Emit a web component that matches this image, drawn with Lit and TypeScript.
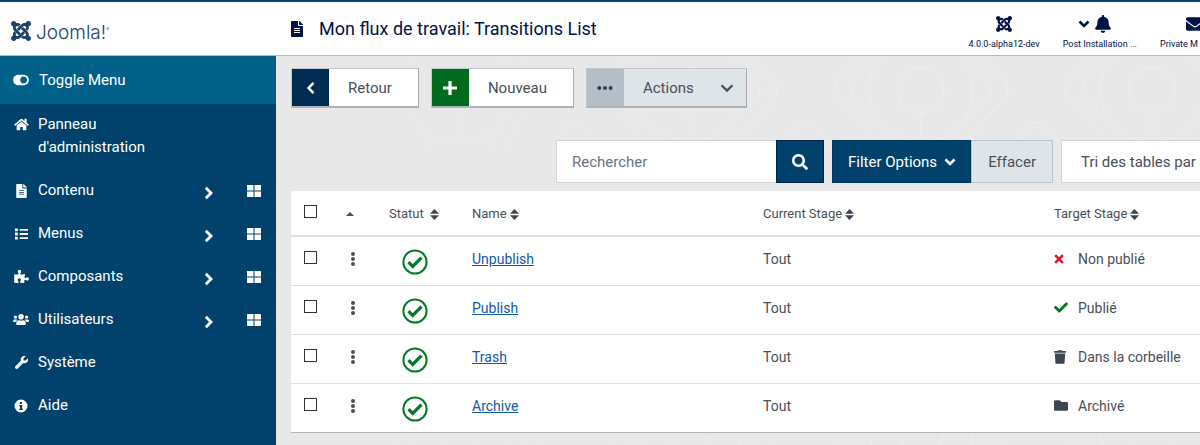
import { LitElement, html, svg, css, nothing } from "lit";
import { customElement, property, state } from "lit/decorators.js";

const line = (d: string, w: number) =>
  svg`<path d=${d} fill="none" stroke="currentColor" stroke-width=${w} />`;
const fill = (d: string) => svg`<path d=${d} fill="currentColor" />`;

const ICONS: Record<string, [string, unknown]> = {
  joomla: ["0 32 448 448", fill("M.6 92.1C.6 58.8 27.4 32 60.4 32c30 0 54.5 21.9 59.2 50.2 32.6-7.6 67.1.6 96.5 30l-44.3 44.3c-20.5-20.5-42.6-16.3-55.4-3.5-14.3 14.3-14.3 37.9 0 52.2l99.5 99.5-44 44.3c-87.7-87.2-49.7-49.7-99.8-99.7-26.8-26.5-35-64.8-24.8-98.9C20.4 144.6.6 120.7.6 92.1zm129.5 116.4l44.3 44.3c10-10 89.7-89.7 99.7-99.8 14.3-14.3 37.6-14.3 51.9 0 12.8 12.8 17 35-3.5 55.4l44 44.3c31.2-31.2 38.5-67.6 28.9-101.2 29.2-4.1 51.9-29.2 51.9-59.5 0-33.2-26.8-60.1-59.8-60.1-30.3 0-55.4 22.5-59.5 51.6-33.8-9.9-71.7-1.5-98.3 25.1-18.3 19.1-71.1 71.5-99.6 99.9zm266.3 152.2c8.2-32.7-.9-68.5-26.3-93.9-11.8-12.2 5 4.7-99.5-99.7l-44.3 44.3 99.7 99.7c14.3 14.3 14.3 37.6 0 51.9-12.8 12.8-35 17-55.4-3.5l-44 44.3c27.6 30.2 68 38.8 102.7 28 5.5 27.4 29.7 48.1 58.9 48.1 33 0 59.8-26.8 59.8-60.1 0-30.2-22.5-55-51.6-59.1zm-84.3-53.1l-44-44.3c-87 86.4-50.4 50.4-99.7 99.8-14.3 14.3-37.6 14.3-51.9 0-13.1-13.4-16.9-35.3 3.2-55.4l-44-44.3c-30.2 30.2-38 65.2-29.5 98.3-26.7 6-46.2 29.9-46.2 58.2C0 453.2 26.8 480 59.8 480c28.6 0 52.5-19.8 58.6-46.7 32.7 8.2 68.5-.6 94.2-26 32.1-32 12.2-12.4 99.5-99.7z")],
  toggle: ["0 0 576 512", fill("M384 64H192C86 64 0 150 0 256s86 192 192 192h192c106 0 192-86 192-192S490 64 384 64zm0 320c-70.8 0-128-57.3-128-128 0-70.8 57.3-128 128-128 70.8 0 128 57.3 128 128 0 70.8-57.3 128-128 128z")],
  file: ["0 0 384 512", fill("M224 136V0H24C10.7 0 0 10.7 0 24v464c0 13.3 10.7 24 24 24h336c13.3 0 24-10.7 24-24V160H248c-13.2 0-24-10.8-24-24zm64 236c0 6.6-5.4 12-12 12H108c-6.6 0-12-5.4-12-12v-8c0-6.6 5.4-12 12-12h168c6.6 0 12 5.4 12 12v8zm0-64c0 6.6-5.4 12-12 12H108c-6.6 0-12-5.4-12-12v-8c0-6.6 5.4-12 12-12h168c6.6 0 12 5.4 12 12v8zm0-72v8c0 6.6-5.4 12-12 12H108c-6.6 0-12-5.4-12-12v-8c0-6.6 5.4-12 12-12h168c6.6 0 12 5.4 12 12zm96-114.1v6.1H256V0h6.1c6.4 0 12.5 2.5 17 7l97.9 98c4.5 4.5 7 10.6 7 16.9z")],
  home: ["0 0 576 512", fill("M280.37 148.26L96 300.11V464a16 16 0 0 0 16 16l112.06-.29a16 16 0 0 0 15.92-16V368a16 16 0 0 1 16-16h64a16 16 0 0 1 16 16v95.64a16 16 0 0 0 16 16.05L464 480a16 16 0 0 0 16-16V300L295.67 148.26a12.19 12.19 0 0 0-15.3 0zM571.6 251.47L488 182.56V44.05a12 12 0 0 0-12-12h-56a12 12 0 0 0-12 12v72.61L318.47 43a48 48 0 0 0-61 0L4.34 251.47a12 12 0 0 0-1.6 16.9l25.5 31A12 12 0 0 0 45.15 301l235.22-193.74a12.19 12.19 0 0 1 15.3 0L530.9 301a12 12 0 0 0 16.9-1.6l25.5-31a12 12 0 0 0-1.7-16.93z")],
  list: ["0 0 14 12", fill("M0 0h3v3H0zM5 .5h9v2H5zM0 4.5h3v3H0zM5 5h9v2H5zM0 9h3v3H0zM5 9.500h9v2H5z")],
  puzzle: ["0 0 576 512", fill("M519.442 288.651c-41.519 0-59.5 31.593-82.058 31.593C377.409 320.244 432 144 432 144s-196.288 80-196.288-3.297c0-35.827 36.288-46.25 36.288-85.985C272 19.216 243.885 0 210.539 0c-34.654 0-66.366 18.891-66.366 56.346 0 41.364 31.711 59.277 31.711 81.75C175.885 207.719 0 166.758 0 166.758v333.237s178.635 41.047 178.635-28.662c0-22.473-40-40.107-40-81.471 0-37.456 29.25-56.346 63.577-56.346 33.673 0 61.788 19.216 61.788 54.717 0 39.735-36.288 50.158-36.288 85.985 0 60.803 129.675 25.73 181.23 25.73 0 0-34.725-120.101 25.827-120.101 35.962 0 46.423 36.152 86.308 36.152C556.712 416 576 387.99 576 354.443c0-34.199-18.962-65.792-56.558-65.792z")],
  users: ["0 0 640 512", svg`<g fill="currentColor"><circle cx="96" cy="160" r="64"/><circle cx="544" cy="160" r="64"/><circle cx="320" cy="144" r="112"/><path d="M0 320c0-40 24-64 64-64h64c20 0 34 6 46 18-38 20-60 48-66 78H32c-20 0-32-12-32-32zM640 320c0-40-24-64-64-64h-64c-20 0-34 6-46 18 38 20 60 48 66 78h76c20 0 32-12 32-32zM128 432v-29c0-64 52-115 115-115h8c44 20 94 20 138 0h8c63 0 115 51 115 115v29c0 26-22 48-48 48H176c-26 0-48-22-48-48z"/></g>`],
  wrench: ["0 0 512 512", fill("M507.73 109.1c-2.24-9.03-13.54-12.09-20.12-5.51l-74.36 74.36-67.88-11.31-11.31-67.88 74.36-74.36c6.62-6.62 3.43-17.9-5.66-20.16-47.38-11.74-99.55.91-136.58 37.93-39.64 39.64-50.55 97.1-34.05 147.2L18.74 402.76c-24.99 24.99-24.99 65.51 0 90.5 24.99 24.99 65.51 24.99 90.5 0l213.21-213.21c50.12 16.71 107.47 5.68 147.37-34.22 37.07-37.07 49.7-89.32 37.91-136.73z")],
  info: ["0 0 14 14", svg`<path fill="currentColor" fill-rule="evenodd" d="M7 .5a6.500 6.500 0 1 0 0 13a6.500 6.500 0 0 0 0-13zM5.800 3h2.200v2H5.800zM5.200 5.900h2.900v3.900h.8v1.300H5.200V9.800H6V7.200h-.8z"/>`],
  grid: ["0 0 14 12", fill("M0 0h6.500v5.500H0zM7.500 0H14v5.500H7.500zM0 6.500h6.500V12H0zM7.500 6.500H14V12H7.500z")],
  right: ["0 0 10 14", line("M1.800 1.800L7 7l-5.200 5.200", 2.800)],
  left: ["0 0 10 14", line("M7.500 1.800L2.600 7l4.900 5.200", 2.500)],
  down: ["0 0 14 10", line("M1.500 2.200L7 7.600l5.500-5.400", 2.300)],
  caret: ["0 0 12 10", line("M1.500 2.500L6 7l4.500-4.500", 2.600)],
  plus: ["0 0 14 14", line("M7 0v14M0 7h14", 3.200)],
  dots: ["0 0 16 4", svg`<g fill="currentColor"><circle cx="2.300" cy="2" r="2"/><circle cx="8" cy="2" r="2"/><circle cx="13.700" cy="2" r="2"/></g>`],
  kebab: ["0 0 4 14", svg`<g fill="currentColor"><circle cx="2" cy="2" r="2"/><circle cx="2" cy="7" r="2"/><circle cx="2" cy="12" r="2"/></g>`],
  bell: ["0 0 448 512", fill("M224 512c35.320 0 63.970-28.650 63.970-64H160.030c0 35.350 28.650 64 63.970 64zm215.390-149.710c-19.320-20.760-55.470-51.990-55.470-154.290 0-77.700-54.480-139.900-127.940-155.160V32c0-17.670-14.320-32-31.980-32s-31.980 14.330-31.980 32v20.840C118.560 68.100 64.080 130.300 64.080 208c0 102.300-36.150 133.530-55.470 154.290-6 6.450-8.660 14.160-8.610 21.710.11 16.400 12.980 32 32.100 32h383.800c19.120 0 32-15.600 32.100-32 .05-7.550-2.610-15.270-8.610-21.710z")],
  mail: ["0 64 512 384", fill("M502.3 190.8c3.9-3.1 9.7-.2 9.7 4.7V400c0 26.5-21.5 48-48 48H48c-26.5 0-48-21.5-48-48V195.6c0-5 5.7-7.8 9.7-4.7 22.4 17.4 52.1 39.5 154.1 113.6 21.1 15.4 56.7 47.8 92.2 47.6 35.7.3 72-32.8 92.3-47.6 102-74.1 131.600-96.300 154-113.700zM256 320c23.200.4 56.600-29.200 73.400-41.400 132.700-96.300 142.800-104.700 173.400-128.700 5.800-4.500 9.200-11.500 9.200-18.900v-19c0-26.500-21.500-48-48-48H48c-26.500 0-48 21.500-48 48v19c0 7.400 3.400 14.300 9.200 18.900 30.600 23.900 40.700 32.400 173.400 128.700 16.800 12.200 50.200 41.800 73.400 41.400z")],
  search: ["0 0 512 512", fill("M505 442.7L405.3 343c-4.5-4.5-10.6-7-17-7H372c27.6-35.3 44-79.7 44-128C416 93.1 322.9 0 208 0S0 93.1 0 208s93.1 208 208 208c48.3 0 92.7-16.4 128-44v16.3c0 6.4 2.5 12.5 7 17l99.7 99.7c9.4 9.4 24.6 9.4 33.9 0l28.3-28.3c9.4-9.4 9.4-24.6.1-34zM208 336c-70.7 0-128-57.2-128-128 0-70.7 57.2-128 128-128 70.7 0 128 57.2 128 128 0 70.7-57.2 128-128 128z")],
  check: ["0 60 512 392", fill("M173.898 439.404l-166.4-166.4c-9.997-9.997-9.997-26.206 0-36.204l36.203-36.204c9.997-9.998 26.207-9.998 36.204 0L192 312.69 432.095 72.596c9.997-9.997 26.207-9.997 36.204 0l36.203 36.204c9.997 9.997 9.997 26.206 0 36.204l-294.4 294.401c-9.998 9.997-26.207 9.997-36.204-.001z")],
  cross: ["0 0 10 10", line("M1.200 1.200l7.600 7.600M8.800 1.200L1.200 8.800", 2.600)],
  trash: ["0 0 448 512", fill("M432 32H312l-9.4-18.7A24 24 0 0 0 281.1 0H166.8a23.72 23.72 0 0 0-21.4 13.3L136 32H16A16 16 0 0 0 0 48v32a16 16 0 0 0 16 16h416a16 16 0 0 0 16-16V48a16 16 0 0 0-16-16zM53.2 467a48 48 0 0 0 47.9 45h245.8a48 48 0 0 0 47.9-45L416 128H32z")],
  folder: ["0 64 512 384", fill("M464 128H272l-64-64H48C21.49 64 0 85.49 0 112v288c0 26.51 21.49 48 48 48h416c26.51 0 48-21.49 48-48V176c0-26.51-21.49-48-48-48z")],
  sort: ["0 0 9 11", fill("M4.500 0L9 4.700H0zM0 6.300h9L4.500 11z")],
  up: ["0 0 8 4", fill("M4 0l4 4H0z")],
  published: ["0 0 26 26", svg`<circle cx="13" cy="13" r="11.600" fill="none" stroke="currentColor" stroke-width="2"/><path d="M6.500 13.200l4.200 4.200 8.800-8.800" fill="none" stroke="currentColor" stroke-width="3.200"/>`],
};

const icon = (name: string, width: number, height: number) => html`<svg
  class="icon" viewBox=${ICONS[name][0]} width=${width} height=${height} aria-hidden="true"
>${ICONS[name][1]}</svg>`;

const shared = css`
  * { box-sizing: border-box; }
  .icon { display: block; flex: none; }
  a { color: inherit; text-decoration: none; }
  button, input, select { font: inherit; color: inherit; margin: 0; border-radius: 0; }
  button { display: flex; align-items: center; padding: 0; border: 0; background: none; cursor: pointer; }
`;

@customElement("page-header")
class PageHeader extends LitElement {
  static styles = [shared, css`
    :host { display: flex; height: 56px; border-top: 2px solid #00436b; border-bottom: 1px solid #b9b9b9; background: #fff; color: #001247; overflow: hidden; }
    .brand { display: flex; align-items: center; gap: 5px; flex: 0 0 291px; padding: 4px 0 0 11px; color: #1c4266; }
    .word { font: 300 19px/24px Inter, sans-serif; }
    .reg { font-size: 5px; vertical-align: 8px; }
    .title { display: flex; align-items: center; gap: 16px; flex: 1; margin: 0; font-size: 18px; line-height: 24px; font-weight: 400; white-space: nowrap; }
    .status { display: flex; flex: none; gap: 23px; padding-top: 13px; font-size: 9px; line-height: 12px; white-space: nowrap; }
    .item { display: flex; flex-direction: column; align-items: center; gap: 5px; }
    .glyphs { display: flex; align-items: center; gap: 5px; height: 18px; }
    .alerts .glyphs { padding-right: 10px; }
    .mail { width: 40px; align-items: flex-start; }
    .mail .glyphs { padding-left: 26px; }
  `];
  render() {
    return html`
      <a class="brand" href="#" aria-label="Joomla!">${icon("joomla", 20, 20)}<span class="word">Joomla!<span class="reg">®</span></span></a>
      <h1 class="title">${icon("file", 12, 16)}<span>Mon flux de travail: Transitions List</span></h1>
      <div class="status">
        <a class="item" href="#"><span class="glyphs">${icon("joomla", 16, 16)}</span>4.0.0-alpha12-dev</a>
        <a class="item alerts" href="#"><span class="glyphs">${icon("caret", 12, 10)}${icon("bell", 16, 18)}</span>Post Installation ...</a>
        <a class="item mail" href="#"><span class="glyphs">${icon("mail", 18, 14)}</span>Private M</a>
      </div>`;
  }
}

@customElement("side-menu")
class SideMenu extends LitElement {
  static styles = [shared, css`
    :host { display: block; background: #00426b; color: #fff; font-size: 15px; line-height: 23px; }
    .toggle { width: 100%; height: 48px; padding-left: 13px; gap: 10px; background: #006088; text-align: left; }
    ul { list-style: none; margin: 0; padding: 0; }
    .row { display: flex; align-items: flex-start; padding: 9px 14px 11px 13px; }
    .link { display: flex; flex: 1; gap: 9px; }
    .glyph { display: flex; align-items: center; justify-content: center; width: 16px; height: 23px; flex: none; }
    .label { max-width: 130px; }
    .more { height: 23px; padding-top: 5px; margin-right: 32px; }
  `];
  items: [string, string, number, number, boolean][] = [
    ["home", "Panneau d'administration", 15, 13, false],
    ["file", "Contenu", 11, 14, true],
    ["list", "Menus", 13, 12, true],
    ["puzzle", "Composants", 15, 13, true],
    ["users", "Utilisateurs", 16, 13, true],
    ["wrench", "Système", 13, 13, false],
    ["info", "Aide", 14, 14, false],
  ];
  render() {
    return html`
      <button class="toggle">${icon("toggle", 16, 14)}Toggle Menu</button>
      <ul>${this.items.map(([glyph, label, w, h, more]) => html`
        <li class="row">
          <a class="link" href="#"><span class="glyph">${icon(glyph, w, h)}</span><span class="label">${label}</span></a>
          ${more ? html`
            <button class="more" aria-label="Ouvrir ${label}">${icon("right", 10, 14)}</button>
            <a class="glyph" href="#" aria-label="Tableau de bord ${label}">${icon("grid", 14, 12)}</a>` : nothing}
        </li>`)}
      </ul>`;
  }
}

@customElement("tool-bar")
class ToolBar extends LitElement {
  static styles = [shared, css`
    :host { display: flex; gap: 12px; font-size: 15px; line-height: 22px; color: #495057; }
    .tool { height: 40px; border: 1px solid #c4c8cc; border-right-color: #a8acb0; border-bottom: 2px solid #b0b3b6; background: #fff; }
    .glyph { display: flex; align-items: center; justify-content: center; align-self: stretch; width: 37px; color: #fff; }
    .back { background: #002d53; }
    .new { background: #006b1d; }
    .more { background: #b4bec8; color: #33404b; }
    .text { padding: 0 26px 0 19px; }
    .actions { background: #dfe4e8; padding-right: 12px; }
  `];
  render() {
    return html`
      <button class="tool"><span class="glyph back">${icon("left", 10, 14)}</span><span class="text">Retour</span></button>
      <button class="tool"><span class="glyph new">${icon("plus", 14, 14)}</span><span class="text">Nouveau</span></button>
      <button class="tool actions"><span class="glyph more">${icon("dots", 16, 4)}</span><span class="text">Actions</span>${icon("down", 14, 10)}</button>`;
  }
}

@customElement("filter-bar")
class FilterBar extends LitElement {
  static styles = [shared, css`
    :host { display: flex; justify-content: flex-end; gap: 8px; font-size: 15px; line-height: 22px; color: #495057; }
    .group { display: flex; height: 43px; }
    .field { width: 220px; padding: 0 15px; border: 1px solid #ced4da; border-right: 0; background: #fff; outline: 0; }
    .field::placeholder { color: #6c757d; opacity: 1; }
    .search { width: 48px; justify-content: center; border: 1px solid #001f49; background: #00426b; color: #fff; }
    .options { gap: 7px; padding: 0 14px 0 15px; border: 1px solid #00365a; background: #00426b; color: #fff; }
    .clear { padding: 0 16px; border: 1px solid #b9c4d0; background: #dfe4e8; }
    .sort { width: 139px; height: 43px; padding: 0 0 0 19px; border: 1px solid #ced4da; border-right: 0; background: #fff; appearance: none; }
  `];
  @property() query = "";
  render() {
    return html`
      <div class="group">
        <input class="field" type="search" aria-label="Rechercher" placeholder="Rechercher" .value=${this.query}>
        <button class="search" aria-label="Rechercher">${icon("search", 16, 16)}</button>
      </div>
      <div class="group">
        <button class="options">Filter Options ${icon("caret", 12, 10)}</button>
        <button class="clear">Effacer</button>
      </div>
      <select class="sort" aria-label="Tri des tables par"><option>Tri des tables par</option></select>`;
  }
}

@customElement("transition-table")
class TransitionTable extends LitElement {
  static styles = [shared, css`
    :host { display: block; }
    table { width: 100%; border-collapse: collapse; table-layout: fixed; background: #fff; color: #495057; font-size: 14px; line-height: 20px; border-bottom: 1px solid #b4b7ba; }
    th, td { padding: 0; text-align: left; vertical-align: middle; font-weight: 400; white-space: nowrap; }
    th { height: 45px; padding-top: 2px; border-bottom: 2px solid #dde2e7; font-size: 13px; }
    td { height: 49px; padding-bottom: 4px; border-top: 1px solid #dee2e6; }
    tbody tr:first-child td { border-top: 0; }
    .pick { width: 48px; padding-left: 13px; }
    .order { width: 41px; padding-left: 7px; }
    .state { width: 92px; }
    .name { width: 291px; }
    .stage { width: 291px; }
    .box { display: block; width: 13px; height: 13px; appearance: none; border: 1px solid #333; background: #fff; margin-bottom: 2px; }
    th .box { margin-bottom: 6px; }
    .sorter { gap: 3px; }
    .sorter .icon { color: #3b4650; }
    .state .sorter { padding-left: 9px; gap: 6px; }
    td.order { padding-left: 12px; }
    td.state { padding-left: 22px; color: #007a24; }
    td.state .icon { margin-top: 6px; }
    .edit { color: #0f5aa6; text-decoration: underline; }
    .target { display: flex; align-items: center; gap: 9px; }
    .mark { display: flex; width: 15px; color: #3b4650; }
    .cross { color: #e0182d; }
    .check { color: #007a24; }
  `];
  @state() rows: [string, string, number, number, string][] = [
    ["Unpublish", "cross", 10, 10, "Non publié"],
    ["Publish", "check", 14, 11, "Publié"],
    ["Trash", "trash", 12, 14, "Dans la corbeille"],
    ["Archive", "folder", 14, 11, "Archivé"],
  ];
  render() {
    const sorter = (label: string) => html`<button class="sorter">${label}${icon("sort", 9, 11)}</button>`;
    return html`<table>
      <thead><tr>
        <th class="pick"><input class="box" type="checkbox" aria-label="Tout sélectionner"></th>
        <th class="order"><button aria-label="Ordre">${icon("up", 8, 4)}</button></th>
        <th class="state">${sorter("Statut")}</th>
        <th class="name">${sorter("Name")}</th>
        <th class="stage">${sorter("Current Stage")}</th>
        <th>${sorter("Target Stage")}</th>
      </tr></thead>
      <tbody>${this.rows.map(([name, mark, w, h, target]) => html`<tr>
        <td class="pick"><input class="box" type="checkbox" aria-label="Sélectionner ${name}"></td>
        <td class="order">${icon("kebab", 4, 14)}</td>
        <td class="state"><button aria-label="Statut">${icon("published", 26, 26)}</button></td>
        <td><a class="edit" href="#">${name}</a></td>
        <td>Tout</td>
        <td><span class="target"><span class="mark ${mark}">${icon(mark, w, h)}</span>${target}</span></td>
      </tr>`)}</tbody>
    </table>`;
  }
}

@customElement("app-root")
class AppRoot extends LitElement {
  static styles = [shared, css`
    :host { display: flex; flex-direction: column; min-height: 100vh; font-family: Roboto, "Liberation Sans", sans-serif; overflow: hidden; }
    .body { display: grid; grid-template-columns: 276px minmax(0, 1fr); flex: 1; }
    .main {
      display: flex; flex-direction: column; padding: 12px 0 12px 15px;
      background:
        linear-gradient(90deg, #e8e8e8 10%, transparent 60%),
        #e8e8e8 url("data:image/svg+xml,%3Csvg xmlns='http://www.w3.org/2000/svg' width='231' height='170'%3E%3Cdefs%3E%3Cg id='m' fill='none' stroke='%23eeeeee'%3E%3Ccircle cx='183' cy='34' r='23'/%3E%3Ccircle cx='183' cy='34' r='52'/%3E%3Cpath d='M130-8L100 24q-8 10 0 20L124 68q10 12 10 30M147-8L117 24q-8 10 0 20L141 68q10 12 10 30M236-8L266 24q8 10 0 20L242 68q-10 12-10 30M219-8L249 24q8 10 0 20L225 68q-10 12-10 30M183 57v30M44 90l16-20q8-8 16 0l18 20'/%3E%3C/g%3E%3C/defs%3E%3Cuse href='%23m'/%3E%3Cuse href='%23m' x='-231'/%3E%3C/svg%3E");
    }
    filter-bar { margin: 32px 0 8px; }
  `];
  render() {
    return html`
      <page-header></page-header>
      <div class="body">
        <side-menu></side-menu>
        <main class="main">
          <tool-bar></tool-bar>
          <filter-bar></filter-bar>
          <transition-table></transition-table>
        </main>
      </div>`;
  }
}
